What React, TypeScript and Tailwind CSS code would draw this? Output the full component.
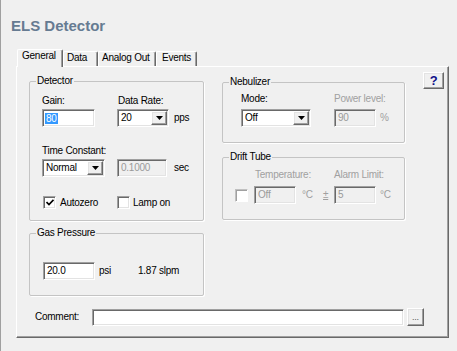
import React from "react";

// classic Win32 bevels
const sunken =
  "border border-t-[#a0a0a0] border-l-[#a0a0a0] border-r-white border-b-white shadow-[inset_1px_1px_0_#696969,inset_-1px_-1px_0_#e3e3e3]";
const raised =
  "border border-t-white border-l-white border-r-[#696969] border-b-[#696969] shadow-[inset_-1px_-1px_0_#a0a0a0,inset_1px_1px_0_#e3e3e3]";

function TextBox({
  value,
  width,
  disabled,
  selected,
}: {
  value: string;
  width: string;
  disabled?: boolean;
  selected?: boolean;
}) {
  return (
    <div
      className={`${sunken} ${width} h-[18px] flex items-center pl-[2px] ${
        disabled ? "bg-[#f0f0f0] text-[#9a9a9a]" : "bg-white text-black"
      }`}
    >
      {selected ? (
        <span className="bg-[#3399ff] text-white leading-[11px] px-[1px]">{value}</span>
      ) : (
        <span className="pl-[1px]">{value}</span>
      )}
    </div>
  );
}

function Combo({ value, width }: { value: string; width: string }) {
  return (
    <div className={`${sunken} ${width} h-[18px] bg-white flex items-center`}>
      <span className="flex-1 pl-[3px]">{value}</span>
      <div
        className={`${raised} w-[16px] h-[14px] mr-[1px] bg-[#f0f0f0] flex items-center justify-center`}
      >
        <svg width="7" height="4" viewBox="0 0 7 4">
          <path d="M0 0h7L3.5 4z" fill="#000" />
        </svg>
      </div>
    </div>
  );
}

function Check({ checked, disabled }: { checked?: boolean; disabled?: boolean }) {
  return (
    <div
      className={`${
        disabled
          ? "border border-t-[#c0c0c0] border-l-[#c0c0c0] border-r-white border-b-white shadow-[inset_1px_1px_0_#a0a0a0]"
          : sunken
      } w-[13px] h-[13px] bg-white flex items-center justify-center`}
    >
      {checked && (
        <svg width="8" height="7" viewBox="0 0 8 7">
          <path d="M0.5 3l2.5 2.5L7.5 0.8" stroke="#000" strokeWidth="1.7" fill="none" />
        </svg>
      )}
    </div>
  );
}

function Group({
  title,
  className,
  children,
}: {
  title: string;
  className: string;
  children: React.ReactNode;
}) {
  return (
    <fieldset
      className={`border border-[#c4c4c4] rounded-[2px] shadow-[1px_1px_0_#fff] ${className}`}
    >
      <legend className="ml-[6px] px-[1px] leading-[12px]">{title}</legend>
      {children}
    </fieldset>
  );
}

const tabs = [
  { name: "General", w: "w-[46px]", pl: "pl-[4px]" },
  { name: "Data", w: "w-[35px]", pl: "pl-[3px]" },
  { name: "Analog Out", w: "w-[58px]", pl: "pl-[3px]" },
  { name: "Events", w: "w-[41px]", pl: "pl-[5px]" },
];

export default function App() {
  return (
    <div className="w-[457px] h-[351px] bg-[#f0f0f0] border-l border-[#a0a0a0] font-['Liberation_Sans',Arial,sans-serif] text-[10px] leading-[12px] tracking-[-0.25px] text-black overflow-hidden">
      {/* Title */}
      <div className="mt-[17px] pl-[10px] text-[15px] leading-[18px] tracking-normal font-bold text-[#667b92]">
        ELS Detector
      </div>

      {/* Tab strip */}
      <div className="mt-[14px] ml-[16px] flex items-end h-[17px] relative z-10">
        {tabs.map((t, i) =>
          i === 0 ? (
            <div
              key={t.name}
              className={`${t.w} ${t.pl} h-[18px] -mb-px bg-[#f0f0f0] border-t border-l border-white border-r border-r-[#696969] rounded-t-[2px] shadow-[inset_-1px_0_0_#a0a0a0]`}
            >
              {t.name}
            </div>
          ) : (
            <div
              key={t.name}
              className={`${t.w} ${t.pl} h-[15px] whitespace-nowrap border-t border-l border-white border-r border-r-[#696969] rounded-t-[2px] shadow-[inset_-1px_0_0_#a0a0a0]`}
            >
              {t.name}
            </div>
          )
        )}
      </div>

      {/* Tab page */}
      <div className="ml-[15px] w-[433px] h-[272px] border border-t-white border-l-white border-r-[#696969] border-b-[#696969] shadow-[inset_-1px_-1px_0_#a0a0a0] flex flex-col">
        <div className="flex items-start">
          {/* Left column */}
          <div className="ml-[12px] mt-[8px] w-[175px] flex flex-col">
            <Group title="Detector" className="h-[146px]">
              <div className="pl-[12px]">
                <div className="flex mt-[8px]">
                  <div className="w-[75px]">Gain:</div>
                  <div className="pl-[1px]">Data Rate:</div>
                </div>
                <div className="flex items-center mt-[2px]">
                  <div className="w-[75px]">
                    <TextBox value="80" width="w-[53px]" selected />
                  </div>
                  <Combo value="20" width="w-[52px]" />
                  <span className="ml-[5px]">pps</span>
                </div>
                <div className="mt-[18px]">Time Constant:</div>
                <div className="flex items-center mt-[2px]">
                  <div className="w-[75px]">
                    <Combo value="Normal" width="w-[63px]" />
                  </div>
                  <TextBox value="0.1000" width="w-[50px]" disabled />
                  <span className="ml-[7px]">sec</span>
                </div>
                <div className="flex items-center mt-[19px]">
                  <div className="w-[75px] flex items-center pl-[1px]">
                    <Check checked />
                    <span className="ml-[4px]">Autozero</span>
                  </div>
                  <Check />
                  <span className="ml-[3px]">Lamp on</span>
                </div>
              </div>
            </Group>

            <Group title="Gas Pressure" className="h-[69px] mt-[6px]">
              <div className="flex items-center mt-[23px] pl-[13px]">
                <TextBox value="20.0" width="w-[52px]" />
                <span className="ml-[4px] w-[39px]">psi</span>
                <span>1.87 slpm</span>
              </div>
            </Group>
          </div>

          {/* Right column */}
          <div className="ml-[18px] mt-[9px] w-[183px] flex flex-col">
            <Group title="Nebulizer" className="h-[67px]">
              <div className="pl-[18px]">
                <div className="flex mt-[5px]">
                  <div className="w-[93px]">Mode:</div>
                  <div className="text-[#a0a0a0]">Power level:</div>
                </div>
                <div className="flex items-center mt-[4px]">
                  <div className="w-[93px]">
                    <Combo value="Off" width="w-[70px]" />
                  </div>
                  <TextBox value="90" width="w-[42px]" disabled />
                  <span className="ml-[4px] text-[#a0a0a0]">%</span>
                </div>
              </div>
            </Group>

            <Group title="Drift Tube" className="h-[69px] mt-[8px]">
              <div className="flex mt-[6px] pl-[32px] text-[#a0a0a0]">
                <div className="w-[79px]">Temperature:</div>
                <div>Alarm Limit:</div>
              </div>
              <div className="flex items-center mt-[5px] pl-[12px]">
                <Check disabled />
                <div className="ml-[6px]">
                  <TextBox value="Off" width="w-[42px]" disabled />
                </div>
                <span className="ml-[6px] w-[21px] text-[#a0a0a0]">°C</span>
                <span className="w-[11px] text-[#a0a0a0] underline">±</span>
                <TextBox value="5" width="w-[42px]" disabled />
                <span className="ml-[4px] text-[#a0a0a0]">°C</span>
              </div>
            </Group>
          </div>

          {/* Help */}
          <button
            className={`${raised} ml-[18px] mt-[5px] w-[21px] h-[17px] bg-[#f0f0f0] flex items-center justify-center text-[13px] leading-[13px] font-bold text-[#10108a]`}
          >
            ?
          </button>
        </div>

        {/* Comment */}
        <div className="flex items-center mt-[12px] ml-[18px]">
          <span className="w-[57px]">Comment:</span>
          <div className={`${sunken} w-[312px] h-[17px] bg-white`} />
          <button
            className={`${raised} ml-[3px] w-[17px] h-[18px] bg-[#f0f0f0] flex items-end justify-center pb-[3px] text-[9px] leading-[9px] text-[#555]`}
          >
            ...
          </button>
        </div>
      </div>
    </div>
  );
}
